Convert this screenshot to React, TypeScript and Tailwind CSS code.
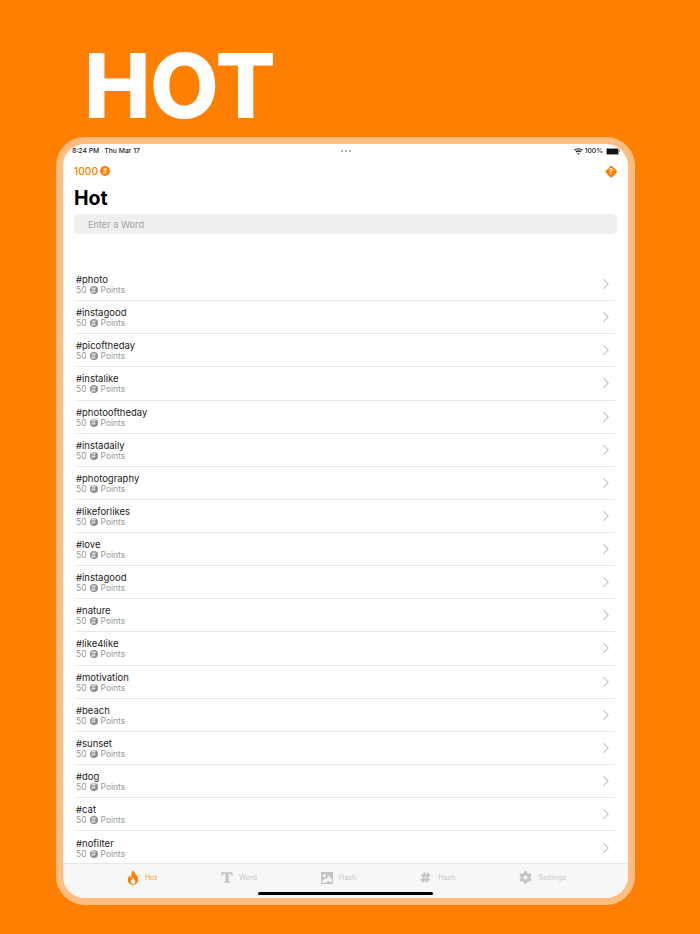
import { ChevronRight } from "lucide-react";
import { FaHashtag, FaCog } from "react-icons/fa";

const tags = ["photo","instagood","picoftheday","instalike","photooftheday","instadaily","photography","likeforlikes","love","instagood","nature","like4like","motivation","beach","sunset","dog","cat","nofilter"];

function Coin({ className }: { className: string }) {
  return (
    <span className={`inline-flex items-center justify-center rounded-full ${className}`}>
      <span className="text-[7px] font-bold leading-none text-white/75">#</span>
    </span>
  );
}

function Tab({ icon, label, active, textClass }: { icon: React.ReactNode; label: string; active?: boolean; textClass: string }) {
  return (
    <div className={`flex items-center ${active ? "text-[#ff7f00]" : "text-[#c4c4c4]"}`}>
      {icon}
      <span className={`pt-[1px] text-[7.2px] ${textClass} ${active ? "text-[#ff9a3c]" : "text-[#c8c8c8]"}`}>{label}</span>
    </div>
  );
}

export default function App() {
  return (
    <div className="h-[934px] w-[700px] overflow-hidden bg-[#ff7f00] font-['Inter',sans-serif]">
      <h1 className="ml-[84px] h-[137px] pt-[30px] text-[89px] font-extrabold leading-[112px] tracking-[-0.5px] text-white">HOT</h1>
      <div className="ml-[56px] h-[768px] w-[579px] overflow-hidden rounded-[29px] border-[7px] border-[#ffbd7f] bg-white">
        <div className="flex h-full flex-col">
          <div className="grid h-[13px] grid-cols-3 items-center pl-[9px] pr-[8px] pt-[1px] text-[6.8px] font-medium text-[#222]">
            <div className="flex gap-[5px]"><span>8:24 PM</span><span>Thu Mar 17</span></div>
            <div className="flex justify-center gap-[1.5px]">
              <span className="h-[2.5px] w-[2.5px] rounded-full bg-[#999]" />
              <span className="h-[2.5px] w-[2.5px] rounded-full bg-[#999]" />
              <span className="h-[2.5px] w-[2.5px] rounded-full bg-[#999]" />
            </div>
            <div className="flex items-center justify-end gap-[2px]">
              <svg width="9" height="7" viewBox="0 0 18 14" fill="none" stroke="#111" strokeWidth="2.4">
                <path d="M1 4.5C5.5 .5 12.5 .5 17 4.5" />
                <path d="M4 8C7 5.5 11 5.500 14 8" />
                <path d="M9 13.5L6.6 11C8 10 10 10 11.4 11Z" fill="#111" stroke="none" />
              </svg>
              <span>100%</span>
              <div className="ml-[1px] flex items-center">
                <div className="h-[7px] w-[13px] rounded-[1.5px] border-[0.5px] border-[#999] bg-[#111]" />
                <div className="h-[2px] w-[1px] bg-[#999]" />
              </div>
            </div>
          </div>
          <div className="flex h-[29px] items-center justify-between pl-[11px] pr-[13px]">
            <div className="flex items-center gap-[2px]">
              <span className="text-[10.2px] font-medium text-[#ff7f00]">1000</span>
              <Coin className="h-[10px] w-[10px] bg-[#ff7f00]" />
            </div>
            <span className="flex h-[8.5px] w-[8.5px] rotate-45 items-center justify-center rounded-[1.5px] bg-[#ff7f00]">
              <span className="-rotate-45 text-[7px] font-bold leading-none text-white">?</span>
            </span>
          </div>
          <div className="pl-[11px] text-[19.5px] font-bold leading-[24px] text-black">Hot</div>
          <div className="mx-[11px] mt-[4px] flex h-[20px] items-center rounded-[5px] bg-[#efefef] pl-[14px] pt-[1px] text-[9.2px] text-[#a3a3a3]">Enter a Word</div>
          <div className="mt-[34px] min-h-0 flex-1 overflow-hidden">
            {tags.map((t, i) => (
              <div key={i} className="mx-[13px] flex h-[33.14px] items-center border-b border-[#e8e8e8] last:border-b-0">
                <div className="flex-1">
                  <div className="pt-[1px] text-[9.5px] leading-[11px] text-[#222]">#{t}</div>
                  <div className="flex items-center gap-[3px] text-[8.5px] leading-[10px] text-[#9a9a9a]">
                    <span>50</span>
                    <Coin className="h-[8px] w-[8px] bg-[#8e8e8e]" />
                    <span>Points</span>
                  </div>
                </div>
                <ChevronRight size={18} strokeWidth={1.4} className="text-[#b4b4b4]" />
              </div>
            ))}
          </div>
          <div className="relative flex h-[35px] items-start border-t border-[#e6e6e6] bg-[#f7f7f7] pt-[6px]">
            <div className="flex w-full items-center justify-between pl-[64px] pr-[62px]">
              <Tab active label="Hot" textClass="ml-[6px]" icon={<svg width="12" height="15" viewBox="0 0 12 16" fill="currentColor"><path fillRule="evenodd" d="M6 0C6.500 3 11.500 5.500 11.500 10.500 11.500 14 9 16 6 16 3 16 .5 14 .5 10.500 .5 8 1.800 6.500 2.800 5.500 3 7 3.600 8 4.400 8.200 4 5 4.500 2 6 0ZM6 15C7.500 15 8.500 13.800 8.500 12.400 8.500 10.800 7 9.800 6.200 8.200 5.600 10 3.600 10.800 3.600 12.600 3.600 13.900 4.600 15 6 15Z" /></svg>} />
              <Tab label="Word" textClass="ml-[6px]" icon={<svg width="12" height="13" viewBox="0 0 13 13" fill="currentColor"><path d="M.5.8h12v4h-1C11.2 3.2 10.4 2.3 8.3 2.2v8.3l1.4.6v1.2H3.3v-1.2l1.400-.6V2.200C2.600 2.300 1.800 3.200 1.500 4.800h-1z" /></svg>} />
              <Tab label="Hash" textClass="ml-[6px]" icon={<svg width="12" height="12" viewBox="0 0 12 12"><path fillRule="evenodd" fill="currentColor" d="M0 0h12v12H0zM3.400 2a1.500 1.500 0 1 0 0 3 1.500 1.500 0 0 0 0-3zM7.800 3.600 5.200 7.200l-1.200-1L1.200 9.400v1.300h3.600l2.600-1.600 3.400 1.600V7.300z" /></svg>} />
              <Tab label="Hash" textClass="ml-[7px]" icon={<FaHashtag size={11} stroke="currentColor" strokeWidth={30} />} />
              <Tab label="Settings" textClass="ml-[6px]" icon={<FaCog size={13} />} />
            </div>
            <div className="absolute bottom-[3px] left-[195px] h-[3px] w-[175px] rounded-full bg-black" />
          </div>
        </div>
      </div>
    </div>
  );
}
